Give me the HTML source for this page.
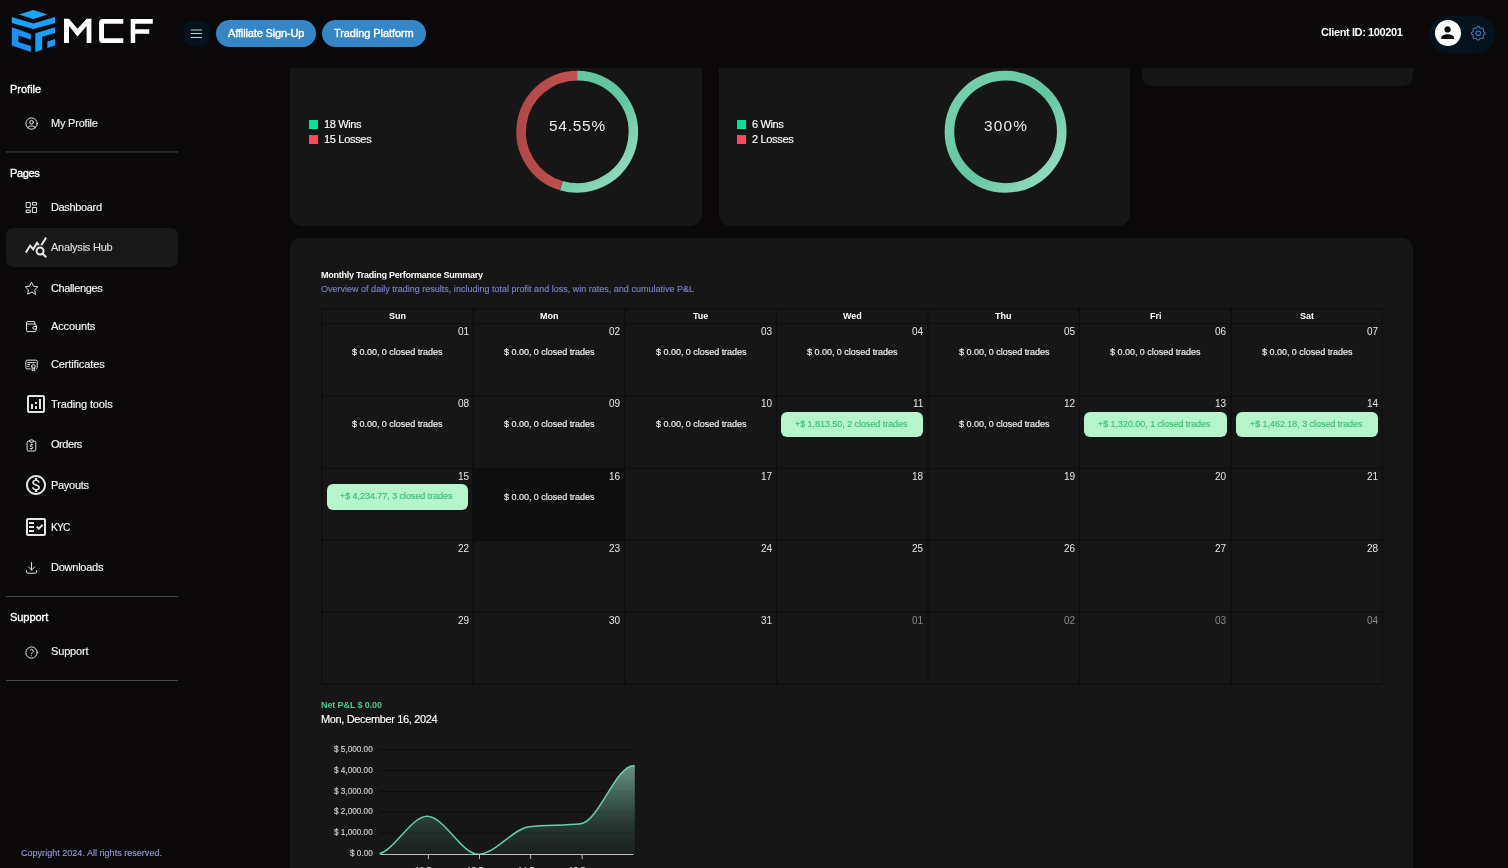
<!DOCTYPE html>
<html lang="en">
<head>
<meta charset="utf-8">
<title>MCF - Analysis Hub</title>
<style>
html,body{margin:0;padding:0;width:1508px;height:868px;overflow:hidden;}
body{width:1508px;height:868px;overflow:hidden;background:#0a0809;font-family:"Liberation Sans",sans-serif;position:relative;}
.abs{position:absolute;}
.t{position:absolute;white-space:nowrap;line-height:1;transform:translateY(-50%);will-change:transform;font-family:"Liberation Sans",sans-serif;}
.card{position:absolute;background:#161616;border-radius:11px;}
svg{overflow:visible;}
.ti{position:absolute;width:15.1px;height:15.1px;fill:none;stroke:#f4f4f4;stroke-width:1.5;stroke-linecap:round;stroke-linejoin:round;}
.mi{position:absolute;width:24px;height:24px;fill:#e4e4e4;}
</style>
</head>
<body>
<div id="root" style="position:absolute;left:0;top:0;width:1508px;height:868px;overflow:hidden;">

<!-- ===== content cards ===== -->
<div class="card" style="left:290.3px;top:40px;width:411.3px;height:185.8px;border-radius:12px;"></div>
<div class="card" style="left:719px;top:40px;width:411.2px;height:185.8px;border-radius:12px;"></div>
<div class="card" style="left:1142px;top:40px;width:271.3px;height:45.8px;border-radius:10px;"></div>
<div class="card" style="left:290.2px;top:237.9px;width:1123.1px;height:640px;border-radius:10.5px;"></div>

<!-- legend squares -->
<div class="abs" style="left:309.2px;top:119.8px;width:8.8px;height:8.8px;background:#00e396;"></div>
<div class="abs" style="left:309.2px;top:134.8px;width:8.8px;height:8.8px;background:#ff4560;"></div>
<div class="abs" style="left:737.4px;top:119.8px;width:8.8px;height:8.8px;background:#00e396;"></div>
<div class="abs" style="left:737.4px;top:134.8px;width:8.8px;height:8.8px;background:#ff4560;"></div>

<!-- donuts -->
<svg class="abs" style="left:0;top:0" width="1508" height="868" viewBox="0 0 1508 868">
  <defs>
    <linearGradient id="gg1" gradientUnits="userSpaceOnUse" x1="520" y1="80" x2="640" y2="190">
      <stop offset="0" stop-color="#62c7a0"/><stop offset="0.55" stop-color="#63c6a0"/><stop offset="1" stop-color="#a4e3cb"/>
    </linearGradient>
    <linearGradient id="gr1" gradientUnits="userSpaceOnUse" x1="516" y1="0" x2="580" y2="0">
      <stop offset="0" stop-color="#b04848"/><stop offset="1" stop-color="#c35251"/>
    </linearGradient>
    <linearGradient id="gg2" gradientUnits="userSpaceOnUse" x1="948" y1="80" x2="1068" y2="190">
      <stop offset="0" stop-color="#7bd1b0"/><stop offset="0.5" stop-color="#62c6a0"/><stop offset="1" stop-color="#a4e3cb"/>
    </linearGradient>
    <linearGradient id="ga" gradientUnits="userSpaceOnUse" x1="0" y1="765" x2="0" y2="855">
      <stop offset="0" stop-color="#a0dcc4" stop-opacity="0.64"/>
      <stop offset="0.4" stop-color="#7ccaac" stop-opacity="0.37"/>
      <stop offset="0.62" stop-color="#6fc3a2" stop-opacity="0.22"/>
      <stop offset="1" stop-color="#4f9f80" stop-opacity="0.07"/>
    </linearGradient>
  </defs>
  <path d="M561.0 185.55 A56.15 56.15 0 0 1 577.5 75.65" fill="none" stroke="url(#gr1)" stroke-width="9.6"/>
  <path d="M577.2 75.65 A56.15 56.15 0 1 1 561.3 185.65" fill="none" stroke="url(#gg1)" stroke-width="9.6"/>
  <circle cx="1005.6" cy="131.8" r="56.15" fill="none" stroke="url(#gg2)" stroke-width="9.6"/>
</svg>

<!-- active item bg -->
<div class="abs" style="left:6px;top:228px;width:171.6px;height:39.4px;border-radius:7px;background:#181818;"></div>
<div style="position:absolute;left:472.90px;top:468.50px;width:151.80px;height:71.90px;background:#0e0e0e"></div>
<svg style="position:absolute;left:0;top:0" width="1508" height="868" viewBox="0 0 1508 868" fill="none" stroke="#0d0d0d" stroke-width="1.1"><path d="M321.60 308.70V684.30"/><path d="M472.90 308.70V684.30"/><path d="M624.70 308.70V684.30"/><path d="M776.40 308.70V684.30"/><path d="M928.00 308.70V684.30"/><path d="M1079.40 308.70V684.30"/><path d="M1231.20 308.70V684.30"/><path d="M1382.30 308.70V684.30"/><path d="M321.60 308.70H1382.30"/><path d="M321.60 323.50H1382.30"/><path d="M321.60 396.20H1382.30"/><path d="M321.60 468.50H1382.30"/><path d="M321.60 540.40H1382.30"/><path d="M321.60 612.40H1382.30"/><path d="M321.60 684.30H1382.30"/></svg>
<div style="position:absolute;left:781.30px;top:412.10px;width:142.10px;height:25.2px;border-radius:6px;background:#b6f5cb"></div>
<div style="position:absolute;left:1084.30px;top:412.10px;width:142.30px;height:25.2px;border-radius:6px;background:#b6f5cb"></div>
<div style="position:absolute;left:1236.10px;top:412.10px;width:141.60px;height:25.2px;border-radius:6px;background:#b6f5cb"></div>
<div style="position:absolute;left:326.50px;top:484.40px;width:141.80px;height:25.2px;border-radius:6px;background:#b6f5cb"></div>

<!-- chart -->
<svg class="abs" style="left:0;top:0" width="1508" height="868" viewBox="0 0 1508 868">
  <g stroke="#0d0d0d" stroke-width="1">
    <path d="M379.6 749.65H633.6"/><path d="M379.6 770.58H633.6"/><path d="M379.6 791.51H633.6"/><path d="M379.6 812.44H633.6"/><path d="M379.6 833.37H633.6"/>
  </g>
  <clipPath id="cp"><rect x="379.6" y="740" width="255.2" height="116"/></clipPath>
  <g clip-path="url(#cp)">
  <path id="area" d="M375.90 854.30 C393.00 854.30 410.10 816.34 427.20 816.34 C444.27 816.34 461.33 854.30 478.40 854.30 C495.43 854.30 512.47 828.64 529.50 826.67 C546.67 824.69 563.83 825.68 581.00 823.70 C598.47 821.68 615.93 765.67 633.40 765.67 C650.47 765.67 667.53 809.98 684.60 854.30 L684.6 854.3 L375.9 854.3 Z" fill="url(#ga)"/>
  <path id="line" d="M375.90 854.30 C393.00 854.30 410.10 816.34 427.20 816.34 C444.27 816.34 461.33 854.30 478.40 854.30 C495.43 854.30 512.47 828.64 529.50 826.67 C546.67 824.69 563.83 825.68 581.00 823.70 C598.47 821.68 615.93 765.67 633.40 765.67 C650.47 765.67 667.53 809.98 684.60 854.30" fill="none" stroke="#63d2a8" stroke-width="1.5"/>
  </g>
  <path d="M380.6 854.45H633.4" stroke="#bcbcbc" stroke-width="1.05"/>
  <g stroke="#bcbcbc" stroke-width="1">
    <path d="M428.4 854.4V859"/><path d="M479.5 854.4V859"/><path d="M530.6 854.4V859"/><path d="M582.2 854.4V859"/>
  </g>
</svg>

<div class="t" style="left:9.87px;top:89.00px;font-size:11px;color:#fff;letter-spacing:-0.005px;-webkit-text-stroke:0.35px #fff;">Profile</div>
<div class="t" style="left:50.87px;top:122.80px;font-size:11px;color:#f2f2f2;letter-spacing:-0.216px;-webkit-text-stroke:0.15px #f2f2f2;">My Profile</div>
<div class="t" style="left:9.87px;top:173.00px;font-size:11px;color:#fff;letter-spacing:-0.386px;-webkit-text-stroke:0.35px #fff;">Pages</div>
<div class="t" style="left:50.87px;top:207.30px;font-size:11px;color:#f6f6f6;letter-spacing:-0.346px;-webkit-text-stroke:0.15px #f6f6f6;">Dashboard</div>
<div class="t" style="left:50.87px;top:247.30px;font-size:11px;color:#dedede;letter-spacing:-0.231px;-webkit-text-stroke:0.15px #dedede;">Analysis Hub</div>
<div class="t" style="left:50.87px;top:287.60px;font-size:11px;color:#f6f6f6;letter-spacing:-0.376px;-webkit-text-stroke:0.15px #f6f6f6;">Challenges</div>
<div class="t" style="left:50.87px;top:326.00px;font-size:11px;color:#f6f6f6;letter-spacing:-0.127px;-webkit-text-stroke:0.15px #f6f6f6;">Accounts</div>
<div class="t" style="left:50.87px;top:364.00px;font-size:11px;color:#f6f6f6;letter-spacing:-0.125px;-webkit-text-stroke:0.15px #f6f6f6;">Certificates</div>
<div class="t" style="left:50.87px;top:404.20px;font-size:11px;color:#f6f6f6;letter-spacing:-0.127px;-webkit-text-stroke:0.15px #f6f6f6;">Trading tools</div>
<div class="t" style="left:50.87px;top:444.30px;font-size:11px;color:#f6f6f6;letter-spacing:-0.453px;-webkit-text-stroke:0.15px #f6f6f6;">Orders</div>
<div class="t" style="left:50.87px;top:484.80px;font-size:11px;color:#f6f6f6;letter-spacing:-0.298px;-webkit-text-stroke:0.15px #f6f6f6;">Payouts</div>
<div class="t" style="left:50.89px;top:527.60px;font-size:10.3px;color:#f6f6f6;letter-spacing:-0.885px;-webkit-text-stroke:0.15px #f6f6f6;">KYC</div>
<div class="t" style="left:50.87px;top:567.30px;font-size:11px;color:#f6f6f6;letter-spacing:-0.245px;-webkit-text-stroke:0.15px #f6f6f6;">Downloads</div>
<div class="t" style="left:9.87px;top:617.30px;font-size:11px;color:#fff;letter-spacing:-0.045px;-webkit-text-stroke:0.35px #fff;">Support</div>
<div class="t" style="left:50.87px;top:651.30px;font-size:11px;color:#f2f2f2;letter-spacing:-0.162px;-webkit-text-stroke:0.15px #f2f2f2;">Support</div>
<div class="t" style="left:20.73px;top:853.00px;font-size:9px;color:#9497cf;letter-spacing:0.025px;-webkit-text-stroke:0.15px #9497cf;">Copyright 2024. All rights reserved.</div>
<div class="t" style="left:227.57px;top:32.60px;font-size:11px;color:#fff;letter-spacing:-0.138px;-webkit-text-stroke:0.4px #fff;z-index:30;">Affiliate Sign-Up</div>
<div class="t" style="left:334.27px;top:32.60px;font-size:11px;color:#fff;letter-spacing:-0.083px;-webkit-text-stroke:0.4px #fff;z-index:30;">Trading Platform</div>
<div class="t" style="left:1321.27px;top:32.10px;font-size:11px;color:#fff;font-weight:700;letter-spacing:-0.387px;z-index:30;">Client ID: 100201</div>
<div class="t" style="left:324.27px;top:124.10px;font-size:11px;color:#fff;letter-spacing:-0.382px;-webkit-text-stroke:0.15px #fff;">18 Wins</div>
<div class="t" style="left:324.27px;top:139.30px;font-size:11px;color:#fff;letter-spacing:-0.312px;-webkit-text-stroke:0.15px #fff;">15 Losses</div>
<div class="t" style="left:752.47px;top:124.10px;font-size:11px;color:#fff;letter-spacing:-0.393px;-webkit-text-stroke:0.15px #fff;">6 Wins</div>
<div class="t" style="left:752.47px;top:139.30px;font-size:11px;color:#fff;letter-spacing:-0.339px;-webkit-text-stroke:0.15px #fff;">2 Losses</div>
<div class="t" style="left:549.14px;top:126.30px;font-size:15.4px;color:#ececec;letter-spacing:0.784px;">54.55%</div>
<div class="t" style="left:984.14px;top:126.30px;font-size:15.4px;color:#ececec;letter-spacing:1.183px;">300%</div>
<div class="t" style="left:321.03px;top:274.90px;font-size:9px;color:#fff;font-weight:700;letter-spacing:-0.250px;">Monthly Trading Performance Summary</div>
<div class="t" style="left:321.03px;top:289.20px;font-size:9px;color:#7d80c8;letter-spacing:0.009px;-webkit-text-stroke:0.15px #7d80c8;">Overview of daily trading results, including total profit and loss, win rates, and cumulative P&amp;L</div>
<div class="t" style="left:388.75px;top:316.10px;font-size:9px;color:#fff;font-weight:700;">Sun</div>
<div class="t" style="left:539.55px;top:316.10px;font-size:9px;color:#fff;font-weight:700;">Mon</div>
<div class="t" style="left:692.88px;top:316.10px;font-size:9px;color:#fff;font-weight:700;">Tue</div>
<div class="t" style="left:842.78px;top:316.10px;font-size:9px;color:#fff;font-weight:700;">Wed</div>
<div class="t" style="left:995.45px;top:316.10px;font-size:9px;color:#fff;font-weight:700;">Thu</div>
<div class="t" style="left:1149.54px;top:316.10px;font-size:9px;color:#fff;font-weight:700;">Fri</div>
<div class="t" style="left:1299.74px;top:316.10px;font-size:9px;color:#fff;font-weight:700;">Sat</div>
<div class="t" style="left:457.62px;top:331.70px;font-size:10px;color:#e8e8e8;">01</div>
<div class="t" style="left:352.38px;top:351.70px;font-size:9px;color:#f2f2f2;letter-spacing:-0.024px;-webkit-text-stroke:0.15px #f2f2f2;">$ 0.00, 0 closed trades</div>
<div class="t" style="left:609.12px;top:331.70px;font-size:10px;color:#e8e8e8;">02</div>
<div class="t" style="left:503.93px;top:351.70px;font-size:9px;color:#f2f2f2;letter-spacing:-0.024px;-webkit-text-stroke:0.15px #f2f2f2;">$ 0.00, 0 closed trades</div>
<div class="t" style="left:760.62px;top:331.70px;font-size:10px;color:#e8e8e8;">03</div>
<div class="t" style="left:655.68px;top:351.70px;font-size:9px;color:#f2f2f2;letter-spacing:-0.024px;-webkit-text-stroke:0.15px #f2f2f2;">$ 0.00, 0 closed trades</div>
<div class="t" style="left:912.12px;top:331.70px;font-size:10px;color:#e8e8e8;">04</div>
<div class="t" style="left:807.33px;top:351.70px;font-size:9px;color:#f2f2f2;letter-spacing:-0.024px;-webkit-text-stroke:0.15px #f2f2f2;">$ 0.00, 0 closed trades</div>
<div class="t" style="left:1063.62px;top:331.70px;font-size:10px;color:#e8e8e8;">05</div>
<div class="t" style="left:958.83px;top:351.70px;font-size:9px;color:#f2f2f2;letter-spacing:-0.024px;-webkit-text-stroke:0.15px #f2f2f2;">$ 0.00, 0 closed trades</div>
<div class="t" style="left:1215.12px;top:331.70px;font-size:10px;color:#e8e8e8;">06</div>
<div class="t" style="left:1110.43px;top:351.70px;font-size:9px;color:#f2f2f2;letter-spacing:-0.024px;-webkit-text-stroke:0.15px #f2f2f2;">$ 0.00, 0 closed trades</div>
<div class="t" style="left:1366.62px;top:331.70px;font-size:10px;color:#e8e8e8;">07</div>
<div class="t" style="left:1261.88px;top:351.70px;font-size:9px;color:#f2f2f2;letter-spacing:-0.024px;-webkit-text-stroke:0.15px #f2f2f2;">$ 0.00, 0 closed trades</div>
<div class="t" style="left:457.62px;top:404.40px;font-size:10px;color:#e8e8e8;">08</div>
<div class="t" style="left:352.38px;top:424.40px;font-size:9px;color:#f2f2f2;letter-spacing:-0.024px;-webkit-text-stroke:0.15px #f2f2f2;">$ 0.00, 0 closed trades</div>
<div class="t" style="left:609.12px;top:404.40px;font-size:10px;color:#e8e8e8;">09</div>
<div class="t" style="left:503.93px;top:424.40px;font-size:9px;color:#f2f2f2;letter-spacing:-0.024px;-webkit-text-stroke:0.15px #f2f2f2;">$ 0.00, 0 closed trades</div>
<div class="t" style="left:760.62px;top:404.40px;font-size:10px;color:#e8e8e8;">10</div>
<div class="t" style="left:655.68px;top:424.40px;font-size:9px;color:#f2f2f2;letter-spacing:-0.024px;-webkit-text-stroke:0.15px #f2f2f2;">$ 0.00, 0 closed trades</div>
<div class="t" style="left:912.86px;top:404.40px;font-size:10px;color:#e8e8e8;">11</div>
<div class="t" style="left:795.33px;top:423.95px;font-size:9px;color:#35c074;letter-spacing:-0.048px;-webkit-text-stroke:0.15px #35c074;">+$ 1,813.50, 2 closed trades</div>
<div class="t" style="left:1063.62px;top:404.40px;font-size:10px;color:#e8e8e8;">12</div>
<div class="t" style="left:958.83px;top:424.40px;font-size:9px;color:#f2f2f2;letter-spacing:-0.024px;-webkit-text-stroke:0.15px #f2f2f2;">$ 0.00, 0 closed trades</div>
<div class="t" style="left:1215.12px;top:404.40px;font-size:10px;color:#e8e8e8;">13</div>
<div class="t" style="left:1098.43px;top:423.95px;font-size:9px;color:#35c074;letter-spacing:-0.048px;-webkit-text-stroke:0.15px #35c074;">+$ 1,320.00, 1 closed trades</div>
<div class="t" style="left:1366.62px;top:404.40px;font-size:10px;color:#e8e8e8;">14</div>
<div class="t" style="left:1249.88px;top:423.95px;font-size:9px;color:#35c074;letter-spacing:-0.048px;-webkit-text-stroke:0.15px #35c074;">+$ 1,462.18, 3 closed trades</div>
<div class="t" style="left:457.62px;top:476.70px;font-size:10px;color:#e8e8e8;">15</div>
<div class="t" style="left:340.38px;top:496.25px;font-size:9px;color:#35c074;letter-spacing:-0.048px;-webkit-text-stroke:0.15px #35c074;">+$ 4,234.77, 3 closed trades</div>
<div class="t" style="left:609.12px;top:476.70px;font-size:10px;color:#e8e8e8;">16</div>
<div class="t" style="left:503.93px;top:496.70px;font-size:9px;color:#f2f2f2;letter-spacing:-0.024px;-webkit-text-stroke:0.15px #f2f2f2;">$ 0.00, 0 closed trades</div>
<div class="t" style="left:760.62px;top:476.70px;font-size:10px;color:#e8e8e8;">17</div>
<div class="t" style="left:912.12px;top:476.70px;font-size:10px;color:#e8e8e8;">18</div>
<div class="t" style="left:1063.62px;top:476.70px;font-size:10px;color:#e8e8e8;">19</div>
<div class="t" style="left:1215.12px;top:476.70px;font-size:10px;color:#e8e8e8;">20</div>
<div class="t" style="left:1366.62px;top:476.70px;font-size:10px;color:#e8e8e8;">21</div>
<div class="t" style="left:457.62px;top:548.60px;font-size:10px;color:#e8e8e8;">22</div>
<div class="t" style="left:609.12px;top:548.60px;font-size:10px;color:#e8e8e8;">23</div>
<div class="t" style="left:760.62px;top:548.60px;font-size:10px;color:#e8e8e8;">24</div>
<div class="t" style="left:912.12px;top:548.60px;font-size:10px;color:#e8e8e8;">25</div>
<div class="t" style="left:1063.62px;top:548.60px;font-size:10px;color:#e8e8e8;">26</div>
<div class="t" style="left:1215.12px;top:548.60px;font-size:10px;color:#e8e8e8;">27</div>
<div class="t" style="left:1366.62px;top:548.60px;font-size:10px;color:#e8e8e8;">28</div>
<div class="t" style="left:457.62px;top:620.60px;font-size:10px;color:#e8e8e8;">29</div>
<div class="t" style="left:609.12px;top:620.60px;font-size:10px;color:#e8e8e8;">30</div>
<div class="t" style="left:760.62px;top:620.60px;font-size:10px;color:#e8e8e8;">31</div>
<div class="t" style="left:912.12px;top:620.60px;font-size:10px;color:#8a8a8a;">01</div>
<div class="t" style="left:1063.62px;top:620.60px;font-size:10px;color:#8a8a8a;">02</div>
<div class="t" style="left:1215.12px;top:620.60px;font-size:10px;color:#8a8a8a;">03</div>
<div class="t" style="left:1366.62px;top:620.60px;font-size:10px;color:#8a8a8a;">04</div>
<div class="t" style="left:320.93px;top:704.95px;font-size:9px;color:#3fcf8e;font-weight:700;letter-spacing:-0.103px;">Net P&amp;L $ 0.00</div>
<div class="t" style="left:320.87px;top:718.80px;font-size:11px;color:#fff;letter-spacing:-0.356px;-webkit-text-stroke:0.15px #fff;">Mon, December 16, 2024</div>
<div class="t" style="left:349.83px;top:853.90px;font-size:8.2px;color:#d0d0d0;-webkit-text-stroke:0.15px #d0d0d0;">$ 0.00</div>
<div class="t" style="left:333.90px;top:833.14px;font-size:8.2px;color:#d0d0d0;-webkit-text-stroke:0.15px #d0d0d0;">$ 1,000.00</div>
<div class="t" style="left:333.90px;top:812.38px;font-size:8.2px;color:#d0d0d0;-webkit-text-stroke:0.15px #d0d0d0;">$ 2,000.00</div>
<div class="t" style="left:333.90px;top:791.62px;font-size:8.2px;color:#d0d0d0;-webkit-text-stroke:0.15px #d0d0d0;">$ 3,000.00</div>
<div class="t" style="left:333.90px;top:770.86px;font-size:8.2px;color:#d0d0d0;-webkit-text-stroke:0.15px #d0d0d0;">$ 4,000.00</div>
<div class="t" style="left:333.90px;top:750.10px;font-size:8.2px;color:#d0d0d0;-webkit-text-stroke:0.15px #d0d0d0;">$ 5,000.00</div>
<div class="t" style="left:415.32px;top:871.30px;font-size:8.2px;color:#d0d0d0;-webkit-text-stroke:0.15px #d0d0d0;">12 Dec</div>
<div class="t" style="left:466.52px;top:871.30px;font-size:8.2px;color:#d0d0d0;-webkit-text-stroke:0.15px #d0d0d0;">13 Dec</div>
<div class="t" style="left:517.72px;top:871.30px;font-size:8.2px;color:#d0d0d0;-webkit-text-stroke:0.15px #d0d0d0;">14 Dec</div>
<div class="t" style="left:568.92px;top:871.30px;font-size:8.2px;color:#d0d0d0;-webkit-text-stroke:0.15px #d0d0d0;">15 Dec</div>

<!-- ===== header (covers scrolled content) ===== -->
<div class="abs" style="left:0;top:0;width:1508px;height:68px;background:#0a0809;z-index:20;"></div>

<div style="position:absolute;left:0;top:0;z-index:25;">
  <!-- logo cube -->
  <svg class="abs" style="left:0;top:0" width="170" height="66" viewBox="0 0 170 66">
    <polygon points="33.2,10 47.4,14.5 33.2,19 19,14.5" fill="#1aa6ff"/>
    <polygon points="11.8,16.9 33.2,23.5 55,16.9 55,23 33.2,28.9 11.8,23" fill="#1aa2ff"/>
    <path d="M11.8 27.3 L30.8 33.9 L30.8 39.7 L18.3 35.4 L18.3 42 L30.8 46 L30.8 51.9 L11.8 45.6 Z" fill="#1b92fb"/>
    <path d="M35.3 33.2 L55 27.3 L55 32.9 L42.2 36.8 L42.2 49.8 L35.3 51.9 Z" fill="#1a9efe"/>
    <path d="M47.4 41.5 L55 39.1 L55 45.4 L47.4 48 Z" fill="#1a9efe"/>
    <!-- MCF -->
    <g fill="#fff">
      <path d="M64 18.85 H69 L77.5 28.8 L86.6 18.85 H91.4 V43.05 H86.6 V26.1 L77.5 36.5 L69 26.1 V43.05 H64 Z"/>
      <path d="M123.3 19 V23.7 H104 V38.3 H123.3 V43 H102.6 Q99.1 43 99.1 39.5 V22.5 Q99.1 19 102.6 19 Z"/>
      <path d="M130.7 19 H152.8 V23.7 H135.2 V29.2 H149.2 V33.65 H135.2 V43 H130.7 Z"/>
    </g>
  </svg>

  <!-- hamburger -->
  <div class="abs" style="left:183.9px;top:20.9px;width:24.9px;height:25.1px;border-radius:7px;background:#04121b;"></div>
  <svg class="abs" style="left:0;top:0" width="220" height="66" viewBox="0 0 220 66" stroke="#c4ccd1" stroke-width="1.05" fill="none">
    <path d="M190.8 30.0H202.1M190.8 33.55H202.1M190.8 37.5H202.1"/>
  </svg>
  <!-- pills -->
  <div class="abs" style="left:215.5px;top:19.9px;width:100.6px;height:27px;border-radius:14px;background:#3586c6;"></div>
  <div class="abs" style="left:321.9px;top:19.9px;width:104.3px;height:27px;border-radius:14px;background:#3586c6;"></div>

  <!-- right pill -->
  <div class="abs" style="left:1428.8px;top:15.5px;width:66.6px;height:37.3px;border-radius:19px;background:#03121c;"></div>
  <div class="abs" style="left:1434.9px;top:20.4px;width:25.9px;height:25.9px;border-radius:50%;background:#fff;"></div>
  <svg class="abs" style="left:1438.0px;top:23.1px;width:19.2px;height:19.2px;" viewBox="0 0 24 24" fill="#0a0a0a"><path d="M12 12c2.21 0 4-1.79 4-4s-1.79-4-4-4-4 1.79-4 4 1.79 4 4 4zm0 2c-2.67 0-8 1.34-8 4v2h16v-2c0-2.66-5.330-4-8-4z"/></svg>
  <svg class="abs" style="left:1469.15px;top:23.85px;width:18.5px;height:18.5px;" viewBox="0 0 24 24" fill="none" stroke="#3d7cc2" stroke-width="1.35" stroke-linecap="round" stroke-linejoin="round"><path d="M10.325 4.317c.426 -1.756 2.924 -1.756 3.350 0a1.724 1.724 0 0 0 2.573 1.066c1.543 -.940 3.310 .826 2.370 2.370a1.724 1.724 0 0 0 1.065 2.572c1.756 .426 1.756 2.924 0 3.350a1.724 1.724 0 0 0 -1.066 2.573c.940 1.543 -.826 3.310 -2.370 2.370a1.724 1.724 0 0 0 -2.572 1.065c-.426 1.756 -2.924 1.756 -3.350 0a1.724 1.724 0 0 0 -2.573 -1.066c-1.543 .940 -3.310 -.826 -2.370 -2.370a1.724 1.724 0 0 0 -1.065 -2.572c-1.756 -.426 -1.756 -2.924 0 -3.350a1.724 1.724 0 0 0 1.066 -2.573c-.940 -1.543 .826 -3.310 2.370 -2.370c1 .608 2.296 .070 2.572 -1.065z"/><path d="M9 12a3 3 0 1 0 6 0a3 3 0 0 0 -6 0"/></svg>
</div>

<!-- ===== sidebar ===== -->
<div style="position:absolute;left:0;top:0;">
  <svg class="abs" style="left:0;top:0" width="200" height="868" viewBox="0 0 200 868" fill="none">
    <path d="M6 151.94H178M6 596.5H178M6 680.5H178" stroke="#484848" stroke-width="1"/>
  </svg>

  <!-- my profile -->
  <svg class="ti" style="left:23.60px;top:115.60px" viewBox="0 0 24 24"><circle cx="12" cy="12" r="9"/><circle cx="12" cy="10" r="3"/><path d="M6.168 18.849a4 4 0 0 1 3.832 -2.849h4a4 4 0 0 1 3.834 2.855"/></svg>
  <!-- dashboard -->
  <svg class="ti" style="left:24.00px;top:199.95px" viewBox="0 0 24 24"><path d="M4 4h6v8h-6z"/><path d="M4 16h6v4h-6z"/><path d="M14 12h6v8h-6z"/><path d="M14 4h6v4h-6z"/></svg>
  <!-- analysis hub : query_stats -->
  <svg class="mi" style="left:23.8px;top:235.3px" viewBox="0 0 24 24"><path d="M19.88 18.47c.44-.7.7-1.51.7-2.39 0-2.49-2.010-4.5-4.5-4.5s-4.5 2.010-4.5 4.5 2.010 4.5 4.490 4.5c.88 0 1.7-.26 2.390-.7L21.58 23 23 21.58l-3.120-3.110zm-3.800.11c-1.380 0-2.5-1.120-2.5-2.5s1.120-2.5 2.5-2.5 2.5 1.120 2.5 2.5-1.120 2.5-2.5 2.5zm-.36-8.5c-.74.020-1.450.18-2.100.45l-.55-.83-3.800 6.180-3.010-3.520-3.630 5.810L1 17l5-8 3 3.5L13 6l2.720 4.080zm2.590.5c-.64-.28-1.330-.45-2.050-.49L21.380 2 23 3.180l-4.690 7.400z"/></svg>
  <!-- challenges : star -->
  <svg class="ti" style="left:23.85px;top:280.50px" viewBox="0 0 24 24"><path d="M12 17.75l-6.172 3.245l1.179 -6.873l-5 -4.867l6.900 -1l3.086 -6.253l3.086 6.253l6.900 1l-5 4.867l1.179 6.873z"/></svg>
  <!-- accounts : wallet -->
  <svg class="ti" style="left:24.00px;top:318.75px" viewBox="0 0 24 24"><path d="M17 8v-3a1 1 0 0 0 -1 -1h-10a2 2 0 0 0 0 4h12a1 1 0 0 1 1 1v3m0 4v3a1 1 0 0 1 -1 1h-12a2 2 0 0 1 -2 -2v-12"/><path d="M20 12v4h-4a2 2 0 0 1 0 -4h4"/></svg>
  <!-- certificates -->
  <svg class="ti" style="left:23.95px;top:357.30px" viewBox="0 0 24 24"><path d="M15 15m-3 0a3 3 0 1 0 6 0a3 3 0 1 0 -6 0"/><path d="M13 17.5v4.5l2 -1.5l2 1.5v-4.500"/><path d="M10 19h-5a2 2 0 0 1 -2 -2v-10c0 -1.100 .9 -2 2 -2h14a2 2 0 0 1 2 2v10a2 2 0 0 1 -1 1.730"/><path d="M6 9l12 0"/><path d="M6 12l3 0"/><path d="M6 15l2 0"/></svg>
  <!-- trading tools : analytics -->
  <svg class="mi" style="left:23.95px;top:392.2px" viewBox="0 0 24 24"><path d="M19 3H5c-1.100 0-2 .9-2 2v14c0 1.100.9 2 2 2h14c1.100 0 2-.9 2-2V5c0-1.100-.9-2-2-2zm0 16H5V5h14v14z"/><path d="M7 12h2v5H7zm8-5h2v10h-2zm-4 7h2v3h-2zm0-4h2v2h-2z"/></svg>
  <!-- orders : report-money -->
  <svg class="ti" style="left:24.10px;top:438.10px;width:14.9px;height:14.9px" viewBox="0 0 24 24"><path d="M9 5h-2a2 2 0 0 0 -2 2v12a2 2 0 0 0 2 2h10a2 2 0 0 0 2 -2v-12a2 2 0 0 0 -2 -2h-2"/><path d="M9 3m0 2a2 2 0 0 1 2 -2h2a2 2 0 0 1 2 2v0a2 2 0 0 1 -2 2h-2a2 2 0 0 1 -2 -2z"/><path d="M14 11h-2.500a1.500 1.500 0 0 0 0 3h1a1.500 1.500 0 0 1 0 3h-2.500"/><path d="M12 17v1m0 -8v1"/></svg>
  <!-- payouts : paid outlined -->
  <svg class="mi" style="left:23.9px;top:472.85px" viewBox="0 0 24 24"><path d="M12 2C6.480 2 2 6.480 2 12s4.480 10 10 10 10-4.480 10-10S17.520 2 12 2zm0 18c-4.410 0-8-3.590-8-8s3.590-8 8-8 8 3.590 8 8-3.590 8-8 8zm.31-8.860c-1.770-.45-2.340-.94-2.340-1.670 0-.84.79-1.430 2.100-1.430 1.380 0 1.900.66 1.940 1.640h1.710c-.05-1.340-.87-2.570-2.490-2.970V5H10.900v1.690c-1.510.32-2.720 1.300-2.720 2.810 0 1.790 1.490 2.690 3.660 3.210 1.950.46 2.340 1.150 2.340 1.870 0 .53-.39 1.390-2.100 1.390-1.600 0-2.230-.72-2.320-1.640H8.040c.1 1.700 1.360 2.660 2.860 2.970V19h2.340v-1.670c1.520-.29 2.720-1.160 2.730-2.770-.01-2.200-1.900-2.960-3.660-3.420z"/></svg>
  <!-- kyc : fact_check -->
  <svg class="mi" style="left:23.9px;top:515px" viewBox="0 0 24 24"><path d="M20 3H4c-1.100 0-2 .9-2 2v14c0 1.100.9 2 2 2h16c1.100 0 2-.9 2-2V5c0-1.100-.9-2-2-2zm0 16H4V5h16v14z"/><path d="M19.410 10.420 17.990 9l-3.170 3.170-1.410-1.420L12 12.160 14.820 15zM5 7h5v2H5zm0 4h5v2H5zm0 4h5v2H5z"/></svg>
  <!-- downloads -->
  <svg class="ti" style="left:24.00px;top:560.20px" viewBox="0 0 24 24"><path d="M4 17v2a2 2 0 0 0 2 2h12a2 2 0 0 0 2 -2v-2"/><path d="M7 11l5 5l5 -5"/><path d="M12 4l0 12"/></svg>
  <!-- support : help -->
  <svg class="ti" style="left:23.95px;top:644.75px" viewBox="0 0 24 24"><circle cx="12" cy="12" r="9"/><path d="M12 17l0 .01"/><path d="M12 13.500a1.500 1.500 0 0 1 1 -1.500a2.600 2.600 0 1 0 -3 -4"/></svg>
</div>

</div>
</body>
</html>
